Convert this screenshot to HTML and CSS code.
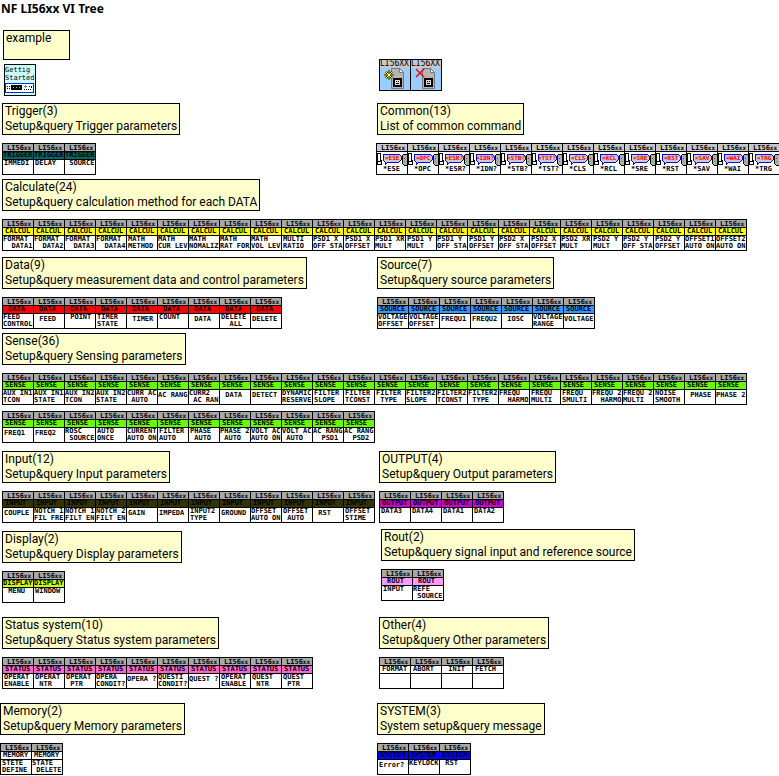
FILE: index.html
```html
<!DOCTYPE html>
<html lang="en">
<head>
<meta charset="utf-8">
<title>NF LI56xx VI Tree</title>
<link rel="stylesheet" href="styles.css">
</head>
<body>
<main class="tree">
  <div class="col">
    <h1>NF LI56xx VI Tree</h1>
    <p class="note example">example</p>
    <div class="starter">
      <span>Gettig</span><span>Started</span>
      <svg viewBox="0 0 30 11" width="30" height="11" shape-rendering="crispEdges" aria-hidden="true">
        <rect x="0.500" y="0.500" width="28" height="9" rx="1" fill="#fff" stroke="#03c"/>
        <path d="M2 3h1v1H2zM2 5h1v1H2zM4 3h1v1H4zM4 5h1v1H4zM6 2h11v5H6zM19 6h1v1h-1zM21 6h1v1h-1zM23 6h1v1h-1zM25 6h1v1h-1zM24 3h1v1h-1zM26 3h1v2h-1z" fill="#000"/>
        <path d="M8 4h1v1H8zM11 4h1v1h-1zM14 4h1v1h-1z" fill="#aaa"/>
        <path d="M19 3h3v1h-3zM20 2h1v3h-1z" fill="#39f"/>
      </svg>
    </div>
    <section class="group" data-set="trigger"><p class="note">Trigger(3)<br>Setup&amp;query Trigger parameters</p></section>
  </div>
  <div class="col right bottom">
    <ul class="tiles sessions" data-sessions></ul>
    <section class="group" data-set="common"><p class="note">Common(13)<br>List of common command</p></section>
  </div>

  <section class="group wide gap-4" data-set="calcul"><p class="note">Calculate(24)<br>Setup&amp;query calculation method for each DATA</p></section>

  <section class="group gap-6" data-set="data"><p class="note">Data(9)<br>Setup&amp;query measurement data and control parameters</p></section>
  <section class="group right gap-6" data-set="source"><p class="note">Source(7)<br>Setup&amp;query source parameters</p></section>

  <section class="group wide gap-4" data-set="sense"><p class="note">Sense(36)<br>Setup&amp;query Sensing parameters</p></section>

  <div class="col">
    <section class="group gap-8" data-set="input"><p class="note">Input(12)<br>Setup&amp;query Input parameters</p></section>
    <section class="group gap-8" data-set="display"><p class="note">Display(2)<br>Setup&amp;query Display parameters</p></section>
    <section class="group gap-14" data-set="status"><p class="note">Status system(10)<br>Setup&amp;query Status system parameters</p></section>
    <section class="group gap-14 flush" data-set="memory"><p class="note">Memory(2)<br>Setup&amp;query Memory parameters</p></section>
  </div>
  <div class="col right">
    <section class="group gap-8 in-2" data-set="output"><p class="note">OUTPUT(4)<br>Setup&amp;query Output parameters</p></section>
    <section class="group gap-6 in-4" data-set="rout"><p class="note">Rout(2)<br>Setup&amp;query signal input and reference source</p></section>
    <section class="group gap-16 in-2" data-set="other"><p class="note">Other(4)<br>Setup&amp;query Other parameters</p></section>
    <section class="group gap-14" data-set="system"><p class="note">SYSTEM(3)<br>System setup&amp;query message</p></section>
  </div>
</main>
<script src="tiles.js"></script>
</body>
</html>
```
FILE: styles.css
```css
* { box-sizing: border-box; margin: 0; padding: 0; }
html { overflow: hidden; background: #fff; }
body { font: 12px/15px Roboto, "Noto Sans", sans-serif; color: #000; }
ul { list-style: none; }
svg { display: block; }

.tree {
  display: grid;
  grid-template-columns: minmax(0, 376fr) minmax(0, 403fr);
  align-items: start;
}
.col { display: flex; flex-direction: column; min-width: 0; }
.bottom { align-self: end; }
.wide { grid-column: 1 / -1; }

h1 { font: bold 12px/18px "Noto Sans", sans-serif; padding-left: 1px; }

.note {
  width: max-content;
  padding: 0 2px;
  background: #ffffcc;
  border: 1px solid #000;
}
.example { margin: 12px 0 4px 3px; min-width: 67px; min-height: 30px; }
.starter {
  width: 32px;
  height: 32px;
  margin: 0 0 7px 4px;
  padding-top: 1px;
  background: #ccffff;
  border: 1px solid #000;
  font: 7px/8px "DejaVu Sans Mono", monospace;
}
.starter span { display: block; }
.starter svg { margin-top: 1px; }

.group { display: flex; flex-direction: column; gap: 8px; padding-left: 2px; min-width: 0; }
.right .group, .group.right { padding-left: 1px; }
.group.flush { padding-left: 0; }
.right .group.in-2 { padding-left: 3px; }
.right .group.in-4 { padding-left: 5px; }
.gap-4 { padding-top: 4px; }
.gap-6 { padding-top: 6px; }
.gap-8 { padding-top: 8px; }
.gap-14 { padding-top: 14px; }
.gap-16 { padding-top: 16px; }

.tiles { display: flex; }
.tiles + .tiles { margin-top: -2px; }
.tile {
  flex: none;
  width: 32px;
  height: 32px;
  margin-right: -1px;
  border: 1px solid #000;
  background: #fff;
  white-space: pre;
  font: bold 7px/7px "DejaVu Sans Mono", monospace;
}
.tile > * { display: block; }
.model, .kind { height: 8px; border-bottom: 1px solid #000; }
.model { padding-left: 4px; background: #a8a8a8; }
.model small { font-size: 6px; }
.kind { padding-left: 2px; }
.label { height: 14px; padding-left: 1px; }
.label.low { padding-top: 2px; }
.label.full { padding-left: 0; }

.trigger .kind { background: #006666; padding-left: 0; }
.calcul .kind { background: #ffff00; }
.data .kind { background: #ff0000; padding-left: 5px; }
.source .kind { background: #3399ff; }
.sense .kind { background: #66ff00; }
.input .kind { background: #333300; }
.display .kind { background: #ccff00; padding-left: 0; }
.status .kind { background: #ff66cc; }
.output .kind { background: #cc00cc; }
.rout .kind { background: #ff99ff; padding-left: 5px; }
.system .kind { background: #0000ff; }

.common { margin-left: -1px; }
.common .model, .sessions .model { background: #c8c8c8; }
.common .label { padding-left: 6px; height: 8px; }
.bubble { fill: #ff0000; font: bold 6px "DejaVu Sans Mono", monospace; }

.sessions { padding-left: 3px; margin-bottom: 12px; }
.sessions .tile { background: #99ccff; }
.sessions .model { padding-left: 0; border: 0; font: 8px/8px "DejaVu Sans Mono", monospace; }
```
FILE: tiles.js
```js
// Each entry is "first line|second line"; a leading "~" sets the label lower.
const sets = {
  trigger: ["TRIGGER", ["IMMEDI", "DELAY", " SOURCE"]],
  calcul: ["CALCUL", ["FORMAT|  DATA1", "FORMAT|  DATA2", "FORMAT|  DATA3", "FORMAT|  DATA4",
    "MATH|METHOD", "MATH|CUR LEV", "MATH|NOMALIZ", "MATH|RAT FOR", "MATH|VOL LEV", "MULTI|RATIO",
    "PSD1 X|OFF STA", "PSD1 X|OFFSET", "PSD1 XR|MULT", "PSD1 Y|MULT", "PSD1 Y|OFF STA", "PSD1 Y|OFFSET",
    "PSD2 X|OFF STA", "PSD2 X|OFFSET", "PSD2 XR|MULT", "PSD2 Y|MULT", "PSD2 Y|OFF STA", "PSD2 Y|OFFSET",
    "OFFSET1|AUTO ON", "OFFSET2|AUTO ON"]],
  data: ["DATA", ["FEED|CONTROL", "~ FEED", " POINT", "TIMER|STATE", "~ TIMER", "COUNT", "~ DATA", "DELETE|  ALL", "~DELETE"]],
  source: ["SOURCE", ["VOLTAGE|OFFSET", "VOLTAGE|OFFSET", "~FREQU1", "~FREQU2", "~ IOSC", "VOLTAGE|RANGE", "~VOLTAGE"]],
  sense: ["SENSE", ["AUX IN1|TCON", "AUX IN1|STATE", "AUX IN2|TCON", "AUX IN2|STATE", "CURR AC| AUTO",
    "~AC RANG", "CURR2| AC RAN", "~ DATA", "~DETECT", "DYNAMIC|RESERVE", "FILTER|SLOPE", "FILTER|TCONST",
    "FILTER| TYPE", "FILTER2|SLOPE", "FILTER2|TCONST", "FILTER2| TYPE", "FREQU|  HARMO", "FREQU|MULTI",
    "FREQU|SMULTI", "FREQU 2|  HARMO", "FREQU 2|MULTI", "NOISE|SMOOTH", "~ PHASE", "~PHASE 2"],
    ["~FREQ1", "~FREQ2", "ROSC| SOURCE", "AUTO|ONCE", "CURRENT|AUTO ON", "FILTER|AUTO", "PHASE| AUTO",
    "PHASE 2| AUTO", "VOLT AC|AUTO ON", "VOLT AC| AUTO", "AC RANG|  PSD1", "AC RANG|  PSD2"]],
  input: ["INPUT", ["~COUPLE", "NOTCH 1|FIL FRE", "NOTCH 1|FILT EN", "NOTCH 2|FILT EN", "~GAIN", "~IMPEDA",
    "INPUT2|TYPE", "~GROUND", "OFFSET|AUTO ON", "OFFSET| AUTO", "~ RST", "OFFSET|STIME"]],
  display: ["DISPLAY", [" MENU", "WINDOW"]],
  status: ["STATUS", ["OPERAT|ENABLE", "OPERAT| NTR", "OPERAT| PTR", "OPERA|CONDIT?", "~OPERA ?", "QUESTI|CONDIT?",
    "~QUEST ?", "OPERAT|ENABLE", "QUEST| NTR", "QUEST| PTR"]],
  memory: ["MEMORY", ["STETE|DEFINE", "STATE| DELETE"]],
  output: ["OUTPUT", ["DATA3", "DATA4", "DATA1", "DATA2"]],
  rout: ["ROUT", ["INPUT", "REFE| SOURCE"]],
  other: [["FORMAT", "ABORT", " INIT", "FETCH"], ["", "", "", ""]],
  system: ["SYSTEM", ["~Error?", "KEYLOCK", " RST"]],
  common: ["", ["ESE", "OPC", "ESR?", "IDN?", "STB?", "TST?", "CLS", "RCL", "SRE", "RST", "SAV", "WAI", "TRG"]]
};

const model = '<span class="model">LI56<small>xx</small></span>';

function commandTile(name) {
  return `<li class="tile">${model}<svg viewBox="0 0 30 14" width="30" height="14" shape-rendering="crispEdges">
    <path d="M0 1h3v7h1v4H0z" fill="#fff" stroke="#000"/><path d="M0 9h4" stroke="#000"/>
    <path d="M7 2h15l2 2v4l-2 2H11l-3 3v-3l-2-2V4z" fill="#ccc" stroke="#00f"/>
    <path d="M25 4l2-2h3v11h-3l-2-2z" fill="#b0b0b0" stroke="#000"/>
    <path d="M27 6h1v1h-1z" fill="#f00"/><path d="M27 9h1v1h-1z" fill="#0c0"/>
    <text class="bubble" x="${name.length > 3 ? 6 : 8}" y="8">×${name}</text></svg><span class="label">*${name}</span></li>`;
}

function labelTile(kind, entry) {
  const lines = entry.replace("~", "").split("|");
  let cls = "label";
  if (entry.startsWith("~")) cls += " low";
  if (lines.some(line => line.length > 6)) cls += " full";
  return `<li class="tile">${model}<span class="kind">${kind}</span><span class="${cls}">${lines.join("\n")}</span></li>`;
}

document.querySelectorAll("[data-set]").forEach(group => {
  const key = group.dataset.set;
  const [kind, ...rows] = sets[key];
  rows.forEach(row => {
    const list = document.createElement("ul");
    list.className = "tiles " + key;
    list.innerHTML = row.map((entry, i) =>
      key === "common" ? commandTile(entry) : labelTile(Array.isArray(kind) ? kind[i] : kind, entry)).join("");
    group.append(list);
  });
});

const marks = [
  '<path d="M9 2v10M4 7h10M6 4l6 6M12 4l-6 6" stroke="#000" stroke-width="2"/><path d="M9 2v10M4 7h10M6 4l6 6M12 4l-6 6" stroke="#ff0"/><path d="M8 6h2v2H8z" fill="#fff"/>',
  '<path d="M5 1l8 8M13 1l-8 8" stroke="#f00" stroke-width="1.500"/>'
];
document.querySelector("[data-sessions]").innerHTML = marks.map(mark =>
  `<li class="tile"><span class="model">LI56XX</span><svg viewBox="0 0 30 22" width="30" height="22">
    <path d="M11.500 .5h8l4 4v16h-12z" fill="#b4b4b4" stroke="#777"/><path d="M19.500 .5v4h4z" fill="#fff" stroke="#777"/>
    <path d="M13 10h9v9h-9z"/><path d="M15 12h5v5h-5z" fill="#ddd"/><path d="M16 13h1v1h-1zM18 13h1v1h-1zM16 15h3v1h-3z"/>${mark}</svg></li>`).join("");
```
